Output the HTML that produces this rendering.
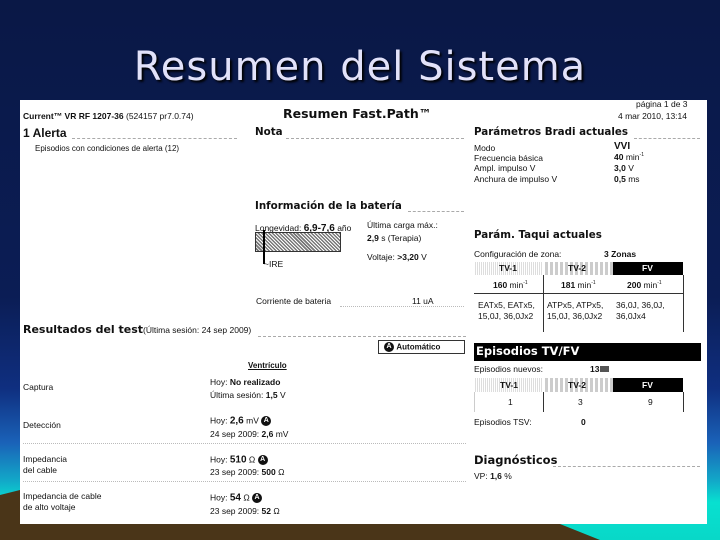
<!DOCTYPE html>
<html><head><meta charset="utf-8"><style>
*{margin:0;padding:0}
body{width:720px;height:540px;overflow:hidden;position:relative;background:linear-gradient(180deg,#0a1846 0%,#0b1d55 55%,#0f2f80 72%,#1a62b8 82%,#12a8c8 89%,#08e0d0 93%,#08d8c8 100%);font-family:"Liberation Sans",Arial,sans-serif;color:#111}
.t{position:absolute;white-space:nowrap;font-size:8.5px;line-height:1}
.b{font-weight:bold}
.h{position:absolute;white-space:nowrap;font-family:"DejaVu Sans",sans-serif;font-weight:bold;font-size:10.3px;line-height:1}
.dash{position:absolute;border-top:1px dashed #aaa;height:0}
.dot{position:absolute;border-top:1px dotted #bbb;height:0}
#doc{position:absolute;left:20px;top:100px;width:687px;height:424px;background:#fff}
.a{display:inline-block;width:10px;height:10px;border-radius:50%;background:#111;color:#fff;font-size:7px;font-weight:bold;text-align:center;line-height:10px;vertical-align:middle}
</style></head><body>
<svg style="position:absolute;left:0;top:0" width="720" height="540">
<polygon points="0,495 20,490 40,485 40,540 0,540" fill="#4a3518"/>
<polygon points="0,524 560,524 600,540 0,540" fill="#4a3518"/>
</svg>
<div style="position:absolute;left:0;width:720px;top:44px;text-align:center;font-family:'DejaVu Sans',sans-serif;font-size:40px;color:#e2e2fa;letter-spacing:1px;text-shadow:2px 2px 2px #000">Resumen del Sistema</div>
<div id="doc"></div>
<div class="t" style="left:23px;top:112px"><b>Current™ VR RF 1207-36</b> (524157 pr7.0.74)</div>
<div class="h" style="left:283px;top:108px;font-size:12.5px">Resumen Fast.Path™</div>
<div class="t" style="left:636px;top:100px">página 1 de 3</div>
<div class="t" style="left:618px;top:112px">4 mar 2010, 13:14</div>

<div class="h" style="left:23px;top:127px;font-family:'Liberation Sans';font-size:12px">1 Alerta</div>
<div class="dash" style="left:72px;top:138px;width:165px"></div>
<div class="t" style="left:35px;top:145px;font-size:8px">Episodios con condiciones de alerta (12)</div>

<div class="h" style="left:255px;top:127px">Nota</div>
<div class="dash" style="left:286px;top:138px;width:178px"></div>

<div class="h" style="left:474px;top:127px">Parámetros Bradi actuales</div>
<div class="dash" style="left:634px;top:138px;width:66px"></div>
<div class="t" style="left:474px;top:144px">Modo</div><div class="t b" style="left:614px;top:142px;font-size:10px">VVI</div>
<div class="t" style="left:474px;top:154px">Frecuencia básica</div><div class="t" style="left:614px;top:153px"><b>40</b> min<sup style="font-size:5px">-1</sup></div>
<div class="t" style="left:474px;top:164px">Ampl. impulso V</div><div class="t" style="left:614px;top:164px"><b>3,0</b> V</div>
<div class="t" style="left:474px;top:175px">Anchura de impulso V</div><div class="t" style="left:614px;top:175px"><b>0,5</b> ms</div>

<div class="h" style="left:255px;top:201px">Información de la batería</div>
<div class="dash" style="left:408px;top:211px;width:56px"></div>
<div class="t" style="left:255px;top:224px">Longevidad: <b style="font-size:10px">6,9-7,6</b> año</div>
<div style="position:absolute;left:255px;top:232px;width:84px;height:18px;border:1px solid #333;background:repeating-linear-gradient(45deg,#fff 0 1px,#777 1px 2.5px)"></div>
<div style="position:absolute;left:263px;top:230px;width:1.5px;height:34px;background:#000"></div>
<div class="t" style="left:264px;top:260px">~IRE</div>
<div class="t" style="left:367px;top:221px">Última carga máx.:</div>
<div class="t" style="left:367px;top:234px"><b>2,9</b> s (Terapia)</div>
<div class="t" style="left:367px;top:253px">Voltaje: <b>&gt;3,20</b> V</div>
<div class="t" style="left:256px;top:297px">Corriente de bateria</div>
<div class="t" style="left:412px;top:297px">11 uA</div>
<div class="dot" style="left:340px;top:306px;width:124px"></div>

<div class="h" style="left:474px;top:230px">Parám. Taqui actuales</div>
<div class="t" style="left:474px;top:250px">Configuración de zona:</div>
<div class="t b" style="left:604px;top:250px">3 Zonas</div>
<div style="position:absolute;left:474px;top:262px;width:69px;height:13px;background:repeating-linear-gradient(90deg,#fff 0 1px,#ddd 1px 2px)"></div>
<div style="position:absolute;left:543px;top:262px;width:70px;height:13px;background:repeating-linear-gradient(90deg,#fff 0 2px,#ccc 2px 5px)"></div>
<div style="position:absolute;left:613px;top:262px;width:70px;height:13px;background:#000"></div>
<div class="t b" style="left:499px;top:264px">TV-1</div>
<div class="t b" style="left:568px;top:264px">TV-2</div>
<div class="t b" style="left:642px;top:264px;color:#fff">FV</div>
<div style="position:absolute;left:474px;top:275px;width:209px;height:18px;border-bottom:1px solid #333"></div>
<div style="position:absolute;left:543px;top:275px;width:0;height:57px;border-left:1px solid #333"></div>
<div style="position:absolute;left:683px;top:275px;width:0;height:57px;border-left:1px solid #333"></div>
<div class="t" style="left:493px;top:281px"><b>160</b> min<sup style="font-size:5px">-1</sup></div>
<div class="t" style="left:561px;top:281px"><b>181</b> min<sup style="font-size:5px">-1</sup></div>
<div class="t" style="left:627px;top:281px"><b>200</b> min<sup style="font-size:5px">-1</sup></div>
<div class="t" style="left:478px;top:300px;line-height:11px">EATx5, EATx5,<br>15,0J, 36,0Jx2</div>
<div class="t" style="left:547px;top:300px;line-height:11px">ATPx5, ATPx5,<br>15,0J, 36,0Jx2</div>
<div class="t" style="left:616px;top:300px;line-height:11px">36,0J, 36,0J,<br>36,0Jx4</div>

<div class="t" style="left:23px;top:324px"><b style="font-family:'DejaVu Sans';font-size:11px">Resultados del test</b>(Última sesión: 24 sep 2009)</div>
<div class="dash" style="left:258px;top:336px;width:208px"></div>
<div style="position:absolute;left:378px;top:340px;width:85px;height:12px;border:1px solid #333"></div>
<div class="t" style="left:384px;top:342px"><span class="a">A</span> <b style="font-size:8px">Automático</b></div>

<div style="position:absolute;left:474px;top:343px;width:227px;height:18px;background:#000"></div>
<div class="h" style="left:476px;top:346px;color:#fff;font-size:11.5px">Episodios TV/FV</div>
<div class="t" style="left:474px;top:365px">Episodios nuevos:</div>
<div class="t b" style="left:590px;top:365px">13<span style="display:inline-block;width:9px;height:6px;background:#555;margin-left:1px"></span></div>
<div style="position:absolute;left:474px;top:378px;width:69px;height:14px;background:repeating-linear-gradient(90deg,#fff 0 1px,#ddd 1px 2px)"></div>
<div style="position:absolute;left:543px;top:378px;width:70px;height:14px;background:repeating-linear-gradient(90deg,#fff 0 2px,#ccc 2px 5px)"></div>
<div style="position:absolute;left:613px;top:378px;width:70px;height:14px;background:#000"></div>
<div class="t b" style="left:500px;top:381px">TV-1</div>
<div class="t b" style="left:568px;top:381px">TV-2</div>
<div class="t b" style="left:642px;top:381px;color:#fff">FV</div>
<div style="position:absolute;left:474px;top:392px;width:0;height:20px;border-left:1px solid #ccc"></div>
<div style="position:absolute;left:543px;top:392px;width:0;height:20px;border-left:1px solid #333"></div>
<div style="position:absolute;left:683px;top:392px;width:0;height:20px;border-left:1px solid #333"></div>
<div class="t" style="left:508px;top:398px">1</div>
<div class="t" style="left:578px;top:398px">3</div>
<div class="t" style="left:648px;top:398px">9</div>
<div class="t" style="left:474px;top:418px">Episodios TSV:</div>
<div class="t b" style="left:581px;top:418px">0</div>
<div class="h" style="left:474px;top:455px;font-size:11.5px">Diagnósticos</div>
<div class="dash" style="left:553px;top:466px;width:147px"></div>
<div class="t" style="left:474px;top:472px">VP: <b>1,6</b> %</div>

<div class="t b" style="left:248px;top:362px;font-size:8px;text-decoration:underline">Ventrículo</div>
<div class="t" style="left:23px;top:383px">Captura</div>
<div class="t" style="left:210px;top:378px">Hoy: <b>No realizado</b></div>
<div class="t" style="left:210px;top:391px">Última sesión: <b>1,5</b> V</div>
<div class="t" style="left:23px;top:421px">Detección</div>
<div class="t" style="left:210px;top:416px">Hoy: <b style="font-size:10px">2,6</b> mV <span class="a">A</span></div>
<div class="t" style="left:210px;top:430px">24 sep 2009: <b>2,6</b> mV</div>
<div class="dot" style="left:23px;top:443px;width:443px"></div>
<div class="t" style="left:23px;top:454px;line-height:11px">Impedancia<br>del cable</div>
<div class="t" style="left:210px;top:455px">Hoy: <b style="font-size:10px">510</b> Ω <span class="a">A</span></div>
<div class="t" style="left:210px;top:468px">23 sep 2009: <b>500</b> Ω</div>
<div class="dot" style="left:23px;top:481px;width:443px"></div>
<div class="t" style="left:23px;top:491px;line-height:11px">Impedancia de cable<br>de alto voltaje</div>
<div class="t" style="left:210px;top:493px">Hoy: <b style="font-size:10px">54</b> Ω <span class="a">A</span></div>
<div class="t" style="left:210px;top:507px">23 sep 2009: <b>52</b> Ω</div>
</body></html>
